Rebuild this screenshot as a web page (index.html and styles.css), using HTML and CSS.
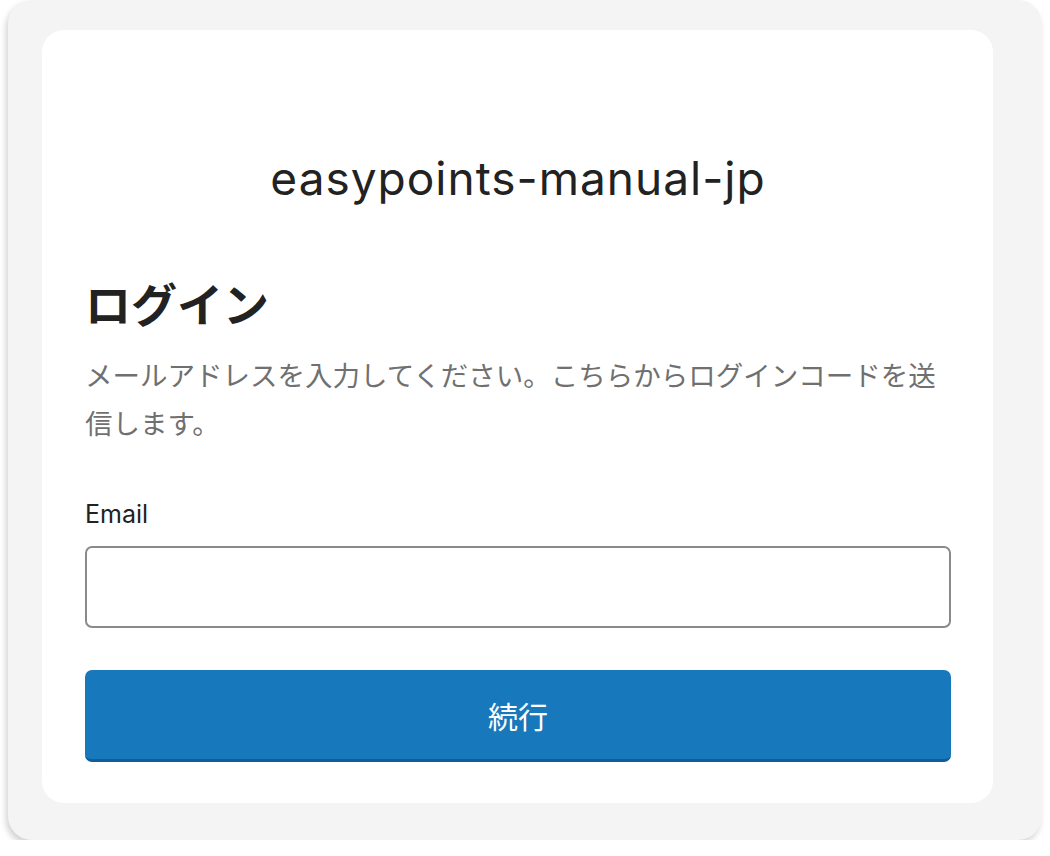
FILE: index.html
```html
<!DOCTYPE html>
<html lang="ja">
<head>
<meta charset="utf-8">
<title>ログイン</title>
<link rel="stylesheet" href="styles.css">
</head>
<body>
<div class="frame">
  <div class="card">
    <h1 class="shop">easypoints-manual-jp</h1>
    <h2 class="title">ログイン</h2>
    <p class="desc">メールアドレスを入力してください。こちらからログインコードを送信します。</p>
    <label class="label" for="email">Email</label>
    <input class="input" id="email" type="email">
    <button class="btn" type="button">続行</button>
  </div>
</div>
</body>
</html>
```

FILE: styles.css
```css
html, body {
  margin: 0;
  padding: 0;
  background: #ffffff;
}
body {
  font-family: Inter, "Noto Sans CJK JP", sans-serif;
  color: #222222;
}
.frame {
  box-sizing: border-box;
  width: 1034px;
  height: 840px;
  margin-left: 8px;
  padding: 30px 49px 37px 34px;
  background: #f4f4f4;
  border-radius: 24px;
  box-shadow: -2px 4px 6px rgba(0,0,0,0.18);
}
.card {
  box-sizing: border-box;
  height: 773px;
  background: #ffffff;
  border-radius: 22px;
  padding: 0 42px 0 43px;
  display: flex;
  flex-direction: column;
}
.shop {
  margin: 122px 0 0;
  text-align: center;
  font-weight: 400;
  font-size: 46px;
  letter-spacing: 1px;
  line-height: 52px;
  color: #222;
}
.title {
  margin: 73px 0 0;
  font-size: 46px;
  line-height: 56px;
  font-weight: 700;
  color: #222;
}
.desc {
  margin: 19px 0 0;
  font-size: 27.5px;
  line-height: 48px;
  color: #707070;
}
.label {
  margin-top: 51px;
  font-size: 25px;
  line-height: 30px;
  color: #222;
}
.input {
  box-sizing: border-box;
  margin-top: 17px;
  height: 82px;
  border: 2px solid #8a8a8a;
  border-radius: 7px;
  background: #fff;
}
.btn {
  margin-top: 42px;
  height: 92px;
  border: 0;
  border-bottom: 3px solid #115e96;
  border-radius: 7px;
  background: #1778bb;
  color: #ffffff;
  font-family: Inter, "Noto Sans CJK JP", sans-serif;
  font-size: 30px;
}
```
